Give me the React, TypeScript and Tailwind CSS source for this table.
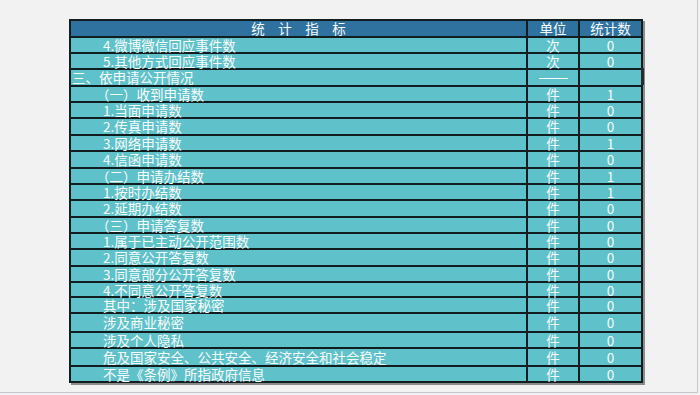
import React from 'react';

type Row = { label: string; unit: string; count: string; indent: 'none' | 'paren' | 'item'; h: number };

const rows: Row[] = [
  { label: '4.微博微信回应事件数', unit: '次', count: '0', indent: 'item', h: 16 },
  { label: '5.其他方式回应事件数', unit: '次', count: '0', indent: 'item', h: 16 },
  { label: '三、依申请公开情况', unit: '——', count: '', indent: 'none', h: 17 },
  { label: '（一）收到申请数', unit: '件', count: '1', indent: 'paren', h: 16 },
  { label: '1.当面申请数', unit: '件', count: '0', indent: 'item', h: 16 },
  { label: '2.传真申请数', unit: '件', count: '0', indent: 'item', h: 17 },
  { label: '3.网络申请数', unit: '件', count: '1', indent: 'item', h: 16 },
  { label: '4.信函申请数', unit: '件', count: '0', indent: 'item', h: 17 },
  { label: '（二）申请办结数', unit: '件', count: '1', indent: 'paren', h: 16 },
  { label: '1.按时办结数', unit: '件', count: '1', indent: 'item', h: 16 },
  { label: '2.延期办结数', unit: '件', count: '0', indent: 'item', h: 17 },
  { label: '（三）申请答复数', unit: '件', count: '0', indent: 'paren', h: 16 },
  { label: '1.属于已主动公开范围数', unit: '件', count: '0', indent: 'item', h: 16 },
  { label: '2.同意公开答复数', unit: '件', count: '0', indent: 'item', h: 17 },
  { label: '3.同意部分公开答复数', unit: '件', count: '0', indent: 'item', h: 16 },
  { label: '4.不同意公开答复数', unit: '件', count: '0', indent: 'item', h: 15 },
  { label: '其中：涉及国家秘密', unit: '件', count: '0', indent: 'item', h: 16 },
  { label: '涉及商业秘密', unit: '件', count: '0', indent: 'item', h: 19 },
  { label: '涉及个人隐私', unit: '件', count: '0', indent: 'item', h: 16 },
  { label: '危及国家安全、公共安全、经济安全和社会稳定', unit: '件', count: '0', indent: 'item', h: 18 },
  { label: '不是《条例》所指政府信息', unit: '件', count: '0', indent: 'item', h: 16 },
];

const heightClass: Record<number, string> = {
  15: 'h-[15px]',
  16: 'h-[16px]',
  17: 'h-[17px]',
  18: 'h-[18px]',
  19: 'h-[19px]',
};

const indentClass = { none: 'pl-[1px]', paren: 'pl-[25px]', item: 'pl-[32px]' };

export default function App() {
  return (
    <div
      className="w-[700px] h-[395px] bg-[#f2f2f2] overflow-hidden"
      style={{ fontFamily: '"Noto Sans CJK SC", "Microsoft YaHei", sans-serif' }}
    >
      <div className="w-[698px] h-[393px] border-r border-b border-[#c6c6ce] pt-[19px] pl-[69px]">
        <div className="w-[574px] border-x-2 border-b-2 border-[#111d1f] shadow-[2px_2px_0_#8c8c8c] text-[13.5px] leading-none text-[#f7fbfb]">
          <div className="grid grid-cols-[455px_52px_63px] h-[17px] border-t-2 border-[#111d1f] bg-[#2f72a0]">
            <div className="flex items-center justify-center gap-[13.5px]">
              <span>统</span><span>计</span><span>指</span><span>标</span>
            </div>
            <div className="flex items-center justify-center border-l-2 border-[#111d1f]">单位</div>
            <div className="flex items-center justify-center border-l-2 border-[#111d1f]">统计数</div>
          </div>
          {rows.map((r, i) => (
            <div
              key={i}
              className={`grid grid-cols-[455px_52px_63px] border-t-2 border-[#111d1f] bg-[#5fc1c9] ${heightClass[r.h]} ${r.indent === 'none' ? 'shadow-[3px_0_0_#2a2a2a]' : ''}`}
            >
              <div className={`flex items-center whitespace-nowrap pt-[1px] ${indentClass[r.indent]}`}>{r.label}</div>
              <div className="flex items-center justify-center pt-[1px] border-l-2 border-[#111d1f]">
                {r.unit === '——' ? <span className="block w-[29px] h-[1px] bg-[#f7fbfb]" /> : r.unit}
              </div>
              <div className="flex items-center justify-center pt-[1px] border-l-2 border-[#111d1f]">{r.count}</div>
            </div>
          ))}
        </div>
      </div>
    </div>
  );
}
